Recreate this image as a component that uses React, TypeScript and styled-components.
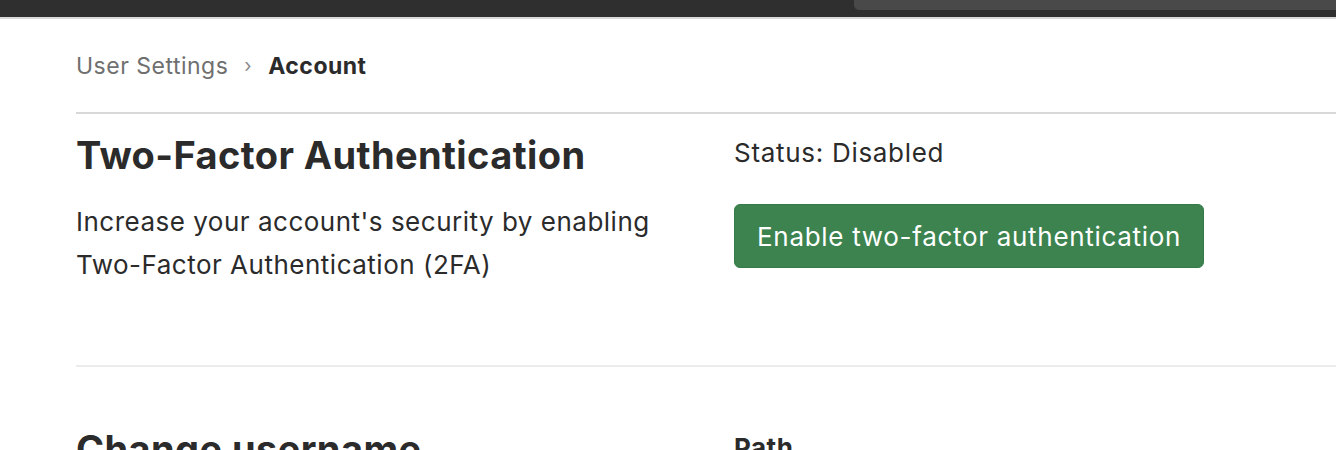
import React from "react";
import styled, { createGlobalStyle } from "styled-components";

const Global = createGlobalStyle`
  html, body { margin: 0; padding: 0; background: #ffffff; }
  body { font-family: Inter, "Noto Sans", sans-serif; color: #2c2c2c; overflow: hidden; }
`;

const TopBar = styled.div`
  height: 17px;
  background: #2f2f2f;
  border-bottom: 2px solid #dadada;
  display: flex;
  justify-content: flex-end;
`;

const TabStrip = styled.div`
  width: 482px;
  height: 10px;
  background: #494949;
  border-bottom-left-radius: 5px;
`;

const Page = styled.main`
  padding-left: 76px;
`;

const Breadcrumb = styled.nav`
  display: flex;
  align-items: center;
  height: 93px;
  font-size: 23px;
  letter-spacing: 0.5px;
  gap: 16px;
  box-sizing: border-box;
`;

const Crumb = styled.span<{ $current?: boolean }>`
  color: ${(p) => (p.$current ? "#2b2b2b" : "#6f6f6f")};
  font-weight: ${(p) => (p.$current ? 700 : 400)};
`;

const Sep = styled.span`
  color: #8a8a8a;
  font-size: 19px;
`;

const Section = styled.section<{ $lineColor: string }>`
  display: grid;
  grid-template-columns: 658px 1fr;
  border-top: 2px solid ${(p) => p.$lineColor};
`;

const Left = styled.div<{ $pad: number }>`
  padding-top: ${(p) => p.$pad}px;
`;

const Right = styled.div<{ $pad: number }>`
  padding-top: ${(p) => p.$pad}px;
  display: flex;
  flex-direction: column;
  align-items: flex-start;
`;

const Heading = styled.h2`
  margin: 0;
  font-size: 38px;
  font-weight: 700;
  line-height: 46px;
  color: #2b2b2b;
  letter-spacing: 0.4px;
  white-space: nowrap;
`;

const Desc = styled.p`
  margin: 22px 0 0;
  font-size: 26px;
  line-height: 43px;
  letter-spacing: 0.5px;
  color: #2b2b2b;
`;

const Status = styled.div`
  font-size: 26px;
  line-height: 34px;
  letter-spacing: 0.7px;
  color: #2b2b2b;
`;

const Label = styled.div`
  font-size: 26px;
  font-weight: 700;
  line-height: 34px;
  letter-spacing: 0.5px;
  color: #2b2b2b;
`;

const PrimaryButton = styled.button`
  margin-top: 34px;
  height: 64px;
  padding: 0 22px;
  border-radius: 6px;
  border: 1px solid #367a48;
  background: #3c8350;
  color: #ffffff;
  font-family: Inter, "Noto Sans", sans-serif;
  font-size: 26px;
  letter-spacing: 0.7px;
  cursor: pointer;
`;

const Spacer = styled.div`
  height: 79px;
`;

export default function App() {
  return (
    <>
      <Global />
      <TopBar>
        <TabStrip />
      </TopBar>
      <Page>
        <Breadcrumb>
          <Crumb>User Settings</Crumb>
          <Sep>›</Sep>
          <Crumb $current>Account</Crumb>
        </Breadcrumb>
        <Section $lineColor="#d8d8d8">
          <Left $pad={18}>
            <Heading>Two-Factor Authentication</Heading>
            <Desc>
              Increase your account's security by enabling
              <br />
              Two-Factor Authentication (2FA)
            </Desc>
          </Left>
          <Right $pad={22}>
            <Status>Status: Disabled</Status>
            <PrimaryButton>Enable two-factor authentication</PrimaryButton>
          </Right>
          <Spacer />
        </Section>
        <Section $lineColor="#ececec">
          <Left $pad={59}>
            <Heading>Change username</Heading>
          </Left>
          <Right $pad={64}>
            <Label>Path</Label>
          </Right>
        </Section>
      </Page>
    </>
  );
}
